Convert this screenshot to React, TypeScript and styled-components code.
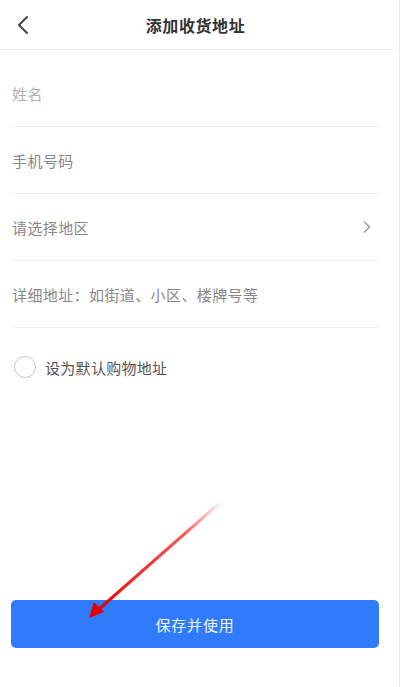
import React from "react";
import styled, { createGlobalStyle } from "styled-components";

const Global = createGlobalStyle`
  html, body { margin: 0; padding: 0; background: #fff; }
  body { font-family: "Noto Sans CJK SC", "Noto Sans", sans-serif; }
  * { box-sizing: border-box; }
`;

const Page = styled.div`
  position: relative;
  width: 400px;
  height: 687px;
  background: #fff;
  display: flex;
  flex-direction: column;
  border-right: 1px solid #ececec;
`;

const Header = styled.header`
  height: 50px;
  display: flex;
  align-items: center;
  justify-content: center;
  position: relative;
  border-bottom: 1px solid #f2f2f2;
  padding-right: 8px;
`;

const Back = styled.div`
  position: absolute;
  left: 13px;
  top: 14px;
  width: 20px;
  height: 22px;
  display: flex;
  align-items: center;
  justify-content: center;
`;

const Title = styled.h1`
  margin: 0;
  font-size: 16px;
  font-weight: 700;
  color: #333;
  letter-spacing: 0.6px;
`;

const Form = styled.div`
  display: flex;
  flex-direction: column;
  padding: 10px 20px 0 12px;
`;

const Row = styled.div`
  height: 67px;
  display: flex;
  align-items: center;
  justify-content: space-between;
  border-bottom: 1px solid #f0f0f0;
`;

const Placeholder = styled.span<{ $light?: boolean }>`
  font-size: 15px;
  color: ${(p) => (p.$light ? "#b0b0b0" : "#888")};
  letter-spacing: 0.4px;
`;

const Chevron = styled.div`
  width: 12px;
  height: 14px;
  margin-right: 4px;
  display: flex;
  align-items: center;
`;

const DefaultRow = styled.label`
  display: flex;
  align-items: center;
  gap: 9px;
  padding: 28px 0 0 14px;
`;

const Radio = styled.span`
  width: 22px;
  height: 22px;
  border-radius: 50%;
  border: 1.5px solid #c8c8c8;
`;

const DefaultText = styled.span`
  font-size: 15px;
  color: #555;
  letter-spacing: 0.3px;
`;

const Spacer = styled.div`
  flex: 1;
`;

const SaveButton = styled.button`
  margin: 0 20px 39px 11px;
  height: 48px;
  border: none;
  border-radius: 5px;
  background: #2f7bfc;
  color: #f2f6ff;
  font-size: 15px;
  font-family: inherit;
  letter-spacing: 0.8px;
`;

const ArrowOverlay = styled.svg`
  position: absolute;
  left: 0;
  top: 0;
  pointer-events: none;
`;

export default function App() {
  return (
    <>
      <Global />
      <Page>
        <Header>
          <Back>
            <svg width="12" height="20" viewBox="0 0 12 20">
              <path d="M10 2 L2 10 L10 18" fill="none" stroke="#444" strokeWidth="2" strokeLinecap="round" strokeLinejoin="round" />
            </svg>
          </Back>
          <Title>添加收货地址</Title>
        </Header>
        <Form>
          <Row>
            <Placeholder $light>姓名</Placeholder>
          </Row>
          <Row>
            <Placeholder>手机号码</Placeholder>
          </Row>
          <Row>
            <Placeholder>请选择地区</Placeholder>
            <Chevron>
              <svg width="8" height="14" viewBox="0 0 8 14">
                <path d="M1.5 2 L6.5 7 L1.5 12" fill="none" stroke="#999" strokeWidth="1.5" strokeLinecap="round" strokeLinejoin="round" />
              </svg>
            </Chevron>
          </Row>
          <Row>
            <Placeholder>详细地址：如街道、小区、楼牌号等</Placeholder>
          </Row>
        </Form>
        <DefaultRow>
          <Radio />
          <DefaultText>设为默认购物地址</DefaultText>
        </DefaultRow>
        <Spacer />
        <SaveButton>保存并使用</SaveButton>
        <ArrowOverlay width="400" height="687" viewBox="0 0 400 687">
          <defs>
            <linearGradient id="ag" x1="223" y1="500" x2="95" y2="612" gradientUnits="userSpaceOnUse">
              <stop offset="0" stopColor="#ff3030" stopOpacity="0" />
              <stop offset="0.3" stopColor="#f42020" stopOpacity="0.75" />
              <stop offset="1" stopColor="#e60000" stopOpacity="1" />
            </linearGradient>
          </defs>
          <path d="M223 500 L98 610" stroke="url(#ag)" strokeWidth="3" strokeLinecap="round" fill="none" />
          <path d="M89 618 L94 602 L104 612 Z" fill="#e60000" />
        </ArrowOverlay>
      </Page>
    </>
  );
}
